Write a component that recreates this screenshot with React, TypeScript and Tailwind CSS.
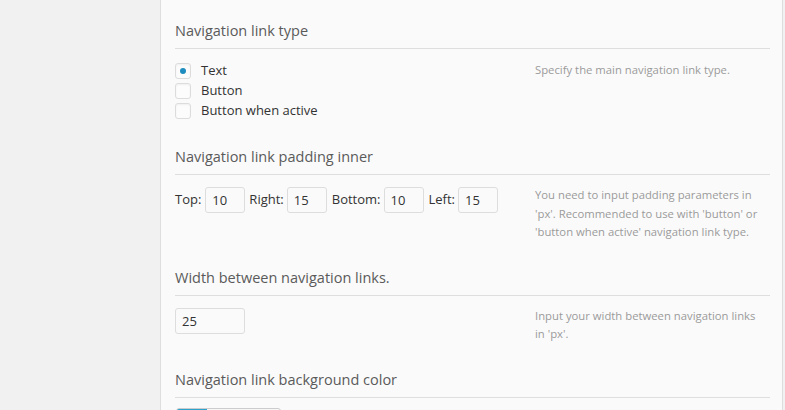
import React from 'react';

const FONT = { fontFamily: '"Open Sans", "Noto Sans", sans-serif' };

function Heading({ children }: { children: React.ReactNode }) {
  return (
    <h3 className="text-[14.5px] leading-[20px] pb-[7px] border-b border-[#dedede] text-[#5a5a5a] font-normal">
      {children}
    </h3>
  );
}

function Desc({ children }: { children: React.ReactNode }) {
  return <p className="w-[224px] text-[11.3px] leading-[18.5px] text-[#9a9a9a]">{children}</p>;
}

function Radio({ label, checked }: { label: string; checked?: boolean }) {
  return (
    <label className="flex items-center h-[20px] gap-[10px]">
      <span className="w-[16px] h-[16px] rounded-[3px] border border-[#dcdcdc] bg-[#fcfcfc] shadow-[inset_0_1px_2px_rgba(0,0,0,0.05)] flex items-center justify-center">
        {checked && <span className="w-[6px] h-[6px] rounded-full bg-[#1e8cbe]" />}
      </span>
      <span className="text-[13px] text-[#333]">{label}</span>
    </label>
  );
}

function NumInput({ value, w = 'w-[40px]' }: { value: string; w?: string }) {
  return (
    <input
      readOnly
      value={value}
      className={`${w} h-[26px] px-[6px] rounded-[3px] border border-[#dddddd] bg-[#fafafa] text-[13px] text-[#333] outline-none`}
      style={FONT}
    />
  );
}

export default function App() {
  return (
    <div className="w-[785px] h-[410px] overflow-hidden flex bg-[#f1f1f1]" style={FONT}>
      <div className="w-[160px] shrink-0" />
      <div className="w-[623px] shrink-0 bg-[#fafafa] border-x border-[#dedede] pl-[14px] pr-[12px] pt-[21px]">
        {/* Link type */}
        <Heading>Navigation link type</Heading>
        <div className="flex mt-[12px]">
          <div className="w-[360px]">
            <Radio label="Text" checked />
            <Radio label="Button" />
            <Radio label="Button when active" />
          </div>
          <Desc>Specify the main navigation link type.</Desc>
        </div>

        {/* Padding */}
        <div className="mt-[26px]">
          <Heading>Navigation link padding inner</Heading>
        </div>
        <div className="flex mt-[11px]">
          <div className="w-[360px] flex items-center text-[13px] text-[#333] pt-[1px] self-start">
            <span className="mr-[4px]">Top:</span>
            <NumInput value="10" />
            <span className="ml-[4px] mr-[3px]">Right:</span>
            <NumInput value="15" />
            <span className="ml-[5px] mr-[3px]">Bottom:</span>
            <NumInput value="10" />
            <span className="ml-[5px] mr-[3px]">Left:</span>
            <NumInput value="15" />
          </div>
          <Desc>
            You need to input padding parameters in 'px'. Recommended to use with 'button' or
            'button when active' navigation link type.
          </Desc>
        </div>

        {/* Width */}
        <div className="mt-[26px]">
          <Heading>Width between navigation links.</Heading>
        </div>
        <div className="flex mt-[11px]">
          <div className="w-[360px] pt-[1px]">
            <NumInput value="25" w="w-[70px]" />
          </div>
          <Desc>Input your width between navigation links in 'px'.</Desc>
        </div>

        {/* Background */}
        <div className="mt-[26px]">
          <Heading>Navigation link background color</Heading>
        </div>
        <div className="mt-[10px] ml-[1px] w-[105px] h-[24px] rounded-[3px] border border-[#cccccc] bg-[#f7f7f7] flex overflow-hidden">
          <span className="w-[30px] bg-[#2ea2cc]" />
        </div>
      </div>
    </div>
  );
}
